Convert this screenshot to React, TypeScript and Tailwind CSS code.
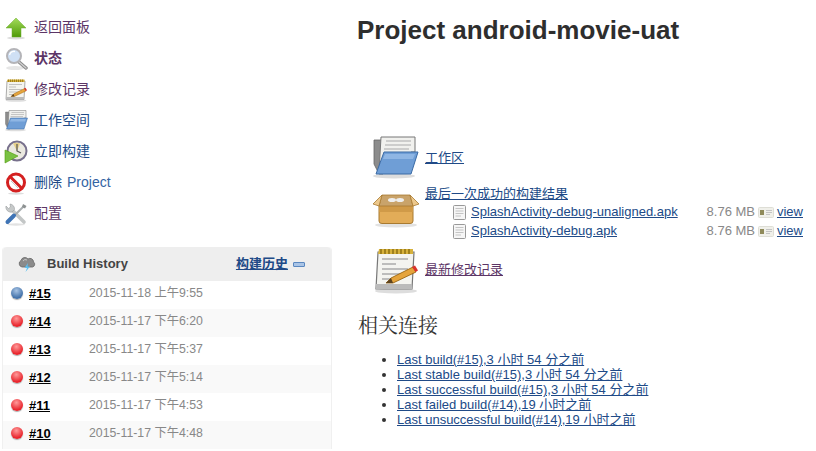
const BLUE = "text-[#204a87]";
const PURPLE = "text-[#5c3566]";

function UpIcon() {
  return (
    <svg width="24" height="24" viewBox="0 0 24 24">
      <defs>
        <linearGradient id="up" x1="0" y1="0" x2="0" y2="1">
          <stop offset="0" stopColor="#a4dc5c" />
          <stop offset="1" stopColor="#4e9a06" />
        </linearGradient>
      </defs>
      <ellipse cx="12" cy="22" rx="9" ry="1.5" fill="#ddd" />
      <path d="M12 2 L22 12 H17 V21 H8 V12 H2 Z" fill="url(#up)" stroke="#6bab2c" strokeWidth="0.5" />
    </svg>
  );
}

function SearchIcon() {
  return (
    <svg width="24" height="24" viewBox="0 0 24 24">
      <ellipse cx="11" cy="21" rx="9" ry="2" fill="#e6e6e6" />
      <path d="M15 15 L22 21" stroke="#8a8a8a" strokeWidth="3.4" strokeLinecap="round" />
      <path d="M15 15 L22 21" stroke="#d0d0d0" strokeWidth="1.4" strokeLinecap="round" />
      <circle cx="10" cy="9" r="7" fill="#cfe0f5" stroke="#b4b4b8" strokeWidth="2" />
      <path d="M5.5 8 A5 5 0 0 1 11 4.5" fill="none" stroke="#fff" strokeWidth="1.4" />
    </svg>
  );
}

function NotepadIcon({ size = 24 }: { size?: number }) {
  return (
    <svg width={size} height={size} viewBox="0 0 48 48">
      <ellipse cx="24" cy="45" rx="21" ry="2.5" fill="#ddd" />
      <path d="M6 6 H42 L40 43 H4 Z" fill="#f4f4f0" stroke="#777" strokeWidth="1.2" />
      <path d="M4 38 H40 V43 H4 Z" fill="#bbb" />
      <path d="M7 3 H41 V8 H6 Z" fill="#d6b13c" />
      <path d="M9 3 V8 M13 3 V8 M17 3 V8 M21 3 V8 M25 3 V8 M29 3 V8 M33 3 V8 M37 3 V8" stroke="#8a6d10" strokeWidth="1.4" />
      <path d="M10 13 H36 M10 18 H24 M10 23 H36 M10 28 H30 M10 33 H20" stroke="#aaa" strokeWidth="1.4" />
      <path d="M14 37 L19 32 L41 21 L44 26 L21 37 Z" fill="#e5a43c" stroke="#8f5902" strokeWidth="0.8" />
      <path d="M14 37 L19 32 L21 37 Z" fill="#5c4320" />
      <path d="M40 21 L43 19.5 L46 24.5 L43.5 26 Z" fill="#d9332e" />
    </svg>
  );
}

function FolderIcon({ size = 24 }: { size?: number }) {
  return (
    <svg width={size} height={size} viewBox="0 0 48 48">
      <ellipse cx="23" cy="42" rx="21" ry="2.5" fill="#ddd" />
      <path d="M3 6 H12 V40 H8 L3 30 Z" fill="#8c8c8c" stroke="#666" strokeWidth="0.8" />
      <path d="M10 3 H44 V18 H40 L34 38 H8 Z" fill="#f1f1ee" stroke="#777" strokeWidth="1" />
      <path d="M15 7 H40 M14 11 H40 M13 15 H38" stroke="#aaa" strokeWidth="1.2" />
      <path d="M13 18 H47 L40 40 H5 Z" fill="#6f9ed6" stroke="#3a6aa5" strokeWidth="1" />
      <path d="M14 20 H44 L42 25 H12 Z" fill="#8fb6e4" />
    </svg>
  );
}

function ClockIcon() {
  return (
    <svg width="24" height="24" viewBox="0 0 24 24">
      <circle cx="13" cy="11" r="9.5" fill="#ebe9e0" stroke="#77708c" strokeWidth="2" />
      <path d="M13 11 L9 3.5 A8 8 0 0 1 16 3.5 Z" fill="#e6d08a" />
      <path d="M13 4 V11 L17 13" fill="none" stroke="#555" strokeWidth="1.2" />
      <path d="M1 10 L14 16 L1 23 Z" fill="#7ac143" stroke="#4e9a06" strokeWidth="0.6" />
    </svg>
  );
}

function NoIcon() {
  return (
    <svg width="24" height="24" viewBox="0 0 24 24">
      <ellipse cx="12" cy="22.5" rx="8" ry="1.2" fill="#ddd" />
      <circle cx="12" cy="11.5" r="8.5" fill="#fff" stroke="#d42020" strokeWidth="3" />
      <path d="M6 5.5 L18 17.5" stroke="#d42020" strokeWidth="3" />
      <path d="M7 10 L14 17" stroke="#bbb" strokeWidth="0.8" />
    </svg>
  );
}

function ToolsIcon() {
  return (
    <svg width="24" height="24" viewBox="0 0 24 24">
      <ellipse cx="12" cy="22.5" rx="9" ry="1.2" fill="#e2e2e2" />
      <path d="M8 8 L20 20" stroke="#c3c6c6" strokeWidth="3.6" strokeLinecap="round" />
      <path d="M2 4 A5 5 0 0 0 8 10 L10.5 7.5 A5 5 0 0 0 6 2 L6.5 5 L4.5 6.5 Z" fill="#c6c9c9" stroke="#9a9e9f" strokeWidth="0.6" />
      <path d="M11 13 L20 4" stroke="#a9aeb0" strokeWidth="2" />
      <path d="M19 2 L22.5 4 L21 6.5 L18 5 Z" fill="#8d9192" />
      <path d="M3.5 20 L10 13.5" stroke="#3f74b5" strokeWidth="4" strokeLinecap="round" />
    </svg>
  );
}

function CloudIcon() {
  return (
    <svg width="18" height="18" viewBox="0 0 18 18">
      <path d="M4 12 A3.5 3.5 0 0 1 3 5.5 A4 4 0 0 1 10 4 A3.5 3.5 0 0 1 15.5 7 A2.8 2.8 0 0 1 14.5 12 Z" fill="#8b8b8b" stroke="#666" strokeWidth="0.8" />
      <path d="M5 6 A3 3 0 0 1 9 5" fill="none" stroke="#c8c8c8" strokeWidth="1" />
      <path d="M10 8 L6.5 13 H9 L7.5 17 L12 11.5 H9.5 Z" fill="#5ec0f0" />
    </svg>
  );
}

function BoxIcon() {
  return (
    <svg width="48" height="48" viewBox="0 0 48 48">
      <ellipse cx="24" cy="40" rx="21" ry="2.5" fill="#e2e2e2" />
      <path d="M7 21 H41 V36 Q41 38.5 38 38.5 H10 Q7 38.5 7 36 Z" fill="#e2ac58" stroke="#a87a30" strokeWidth="1" />
      <path d="M7 21 H41 V27 H7 Z" fill="#d09a48" />
      <path d="M10 10 H38 L41 21 H7 Z" fill="#c9a36a" stroke="#a87a30" strokeWidth="0.8" />
      <ellipse cx="20" cy="15" rx="4" ry="2" fill="#eee" />
      <ellipse cx="28" cy="15" rx="4" ry="2" fill="#eee" />
      <path d="M10 10 L1 19 L7 21 Z M38 10 L47 19 L41 21 Z" fill="#edc88c" stroke="#a87a30" strokeWidth="0.8" />
    </svg>
  );
}

function DocIcon() {
  return (
    <svg width="16" height="16" viewBox="0 0 16 16">
      <rect x="1.5" y="1.5" width="12" height="14" rx="1" fill="#f6f6f6" stroke="#999" />
      <path d="M3.5 4.5 H11.5 M3.5 7 H11.5 M3.5 9.5 H11.5 M3.5 12 H9" stroke="#c4c4c4" />
    </svg>
  );
}

function CardIcon() {
  return (
    <svg width="16" height="16" viewBox="0 0 16 16">
      <rect x="0.5" y="3.5" width="15" height="10" rx="1" fill="#f0f0ea" stroke="#deded6" />
      <rect x="2" y="6" width="4" height="5" fill="#8f8a5a" />
      <path d="M8 6.5 H14 M8 8.5 H14 M8 10.5 H12" stroke="#c4c4c4" />
    </svg>
  );
}

function Ball({ color }: { color: "blue" | "red" }) {
  const bg =
    color === "blue"
      ? "bg-[radial-gradient(circle_at_45%_30%,#a8c4e4,#3f6fa8_70%)]"
      : "bg-[radial-gradient(circle_at_45%_30%,#ff9a9a,#e8222a_70%)]";
  return <span className={`block w-3 h-3 rounded-full shadow-[0_1px_1px_#aaa] ${bg}`} />;
}

const tasks = [
  { icon: <UpIcon />, label: "返回面板", color: PURPLE },
  { icon: <SearchIcon />, label: "状态", color: PURPLE, bold: true },
  { icon: <NotepadIcon />, label: "修改记录", color: PURPLE },
  { icon: <FolderIcon />, label: "工作空间", color: BLUE },
  { icon: <ClockIcon />, label: "立即构建", color: BLUE },
  { icon: <NoIcon />, label: "删除", extra: "Project", color: BLUE },
  { icon: <ToolsIcon />, label: "配置", color: PURPLE },
];

const builds = [
  { no: "#15", time: "2015-11-18 上午9:55", ball: "blue" as const },
  { no: "#14", time: "2015-11-17 下午6:20", ball: "red" as const },
  { no: "#13", time: "2015-11-17 下午5:37", ball: "red" as const },
  { no: "#12", time: "2015-11-17 下午5:14", ball: "red" as const },
  { no: "#11", time: "2015-11-17 下午4:53", ball: "red" as const },
  { no: "#10", time: "2015-11-17 下午4:48", ball: "red" as const },
];

const artifacts = ["SplashActivity-debug-unaligned.apk", "SplashActivity-debug.apk"];

const permalinks = [
  "Last build(#15),3 小时 54 分之前",
  "Last stable build(#15),3 小时 54 分之前",
  "Last successful build(#15),3 小时 54 分之前",
  "Last failed build(#14),19 小时之前",
  "Last unsuccessful build(#14),19 小时之前",
];

export default function App() {
  return (
    <div className="flex w-[816px] h-[451px] overflow-hidden bg-white text-[13px] text-[#333] font-['Liberation_Sans','Noto_Sans_CJK_SC',sans-serif]">
      {/* Side panel */}
      <div className="w-[358px] shrink-0 pt-[12px] pl-[2px] pr-[26px]">
        <div className="flex flex-col">
          {tasks.map((t) => (
            <div key={t.label} className="flex items-center h-[31px]">
              <span className="w-[32px] pl-[2px] shrink-0 flex">{t.icon}</span>
              <a className={`text-[14px] ${t.color} ${t.bold ? "font-bold" : ""}`}>
                {t.label}
                {t.extra && <span className="ml-[5px] text-[#3465a4]">{t.extra}</span>}
              </a>
            </div>
          ))}
        </div>

        <div className="mt-[18px] rounded-t-[4px] border-x border-[#f0f0f0]">
          <div className="flex items-center h-[34px] bg-[#eeeeee] rounded-t-[4px] pl-[15px]">
            <CloudIcon />
            <span className="ml-[11px] font-bold text-[#444] text-[13px]">Build History</span>
            <a className="ml-[108px] font-bold underline text-[#204a87]">构建历史</a>
            <span className="ml-[5px] w-[12px] h-[5px] rounded-[1px] bg-[#a9c4e6] border border-[#5a87bf]" />
          </div>
          {builds.map((b, i) => (
            <div key={b.no} className={`flex items-start h-[28px] pl-[8px] pt-[5px] leading-[15px] ${i % 2 ? "bg-[#f9f9f9]" : "bg-white"}`}>
              <span className="mt-[1px]">
                <Ball color={b.ball} />
              </span>
              <a className="ml-[6px] w-[60px] font-bold underline text-black text-[13px]">{b.no}</a>
              <span className="text-[12.3px] text-[#888]">{b.time}</span>
            </div>
          ))}
        </div>
      </div>

      {/* Main */}
      <div className="flex-1 min-w-0">
        <h1 className="mt-[15px] -ml-px text-[26px] leading-[30px] font-bold text-[#2e2e2e]">Project android-movie-uat</h1>

        <div className="mt-[89px] pl-[13px] flex items-center">
          <FolderIcon size={48} />
          <a className={`ml-[6px] text-[13px] underline ${BLUE}`}>工作区</a>
        </div>

        <div className="mt-[3px] pl-[14px] flex">
          <BoxIcon />
          <div className="ml-[5px] flex-1 pt-[1px]">
            <a className={`text-[13px] underline leading-[16px] block ${BLUE}`}>最后一次成功的构建结果</a>
            {artifacts.map((a) => (
              <div key={a} className="flex items-center h-[19px] pl-[27px] pr-[13px]">
                <DocIcon />
                <a className={`ml-[3px] underline ${BLUE}`}>{a}</a>
                <span className="ml-auto text-[#888]">8.76 MB</span>
                <span className="mx-[3px] flex"><CardIcon /></span>
                <a className={`underline ${BLUE}`}>view</a>
              </div>
            ))}
          </div>
        </div>

        <div className="mt-[6px] pl-[14px] flex items-center">
          <NotepadIcon size={48} />
          <a className={`ml-[5px] text-[13px] underline ${PURPLE}`}>最新修改记录</a>
        </div>

        <h2 className="mt-[19px] text-[20px] leading-[26px] text-[#333] font-['Liberation_Serif','Noto_Serif_CJK_SC','Noto_Sans_CJK_SC',serif]">相关连接</h2>

        <ul className="mt-[13px] pl-[39px] list-disc leading-[15px]">
          {permalinks.map((p) => (
            <li key={p}>
              <a className={`underline ${BLUE}`}>{p}</a>
            </li>
          ))}
        </ul>
      </div>
    </div>
  );
}
